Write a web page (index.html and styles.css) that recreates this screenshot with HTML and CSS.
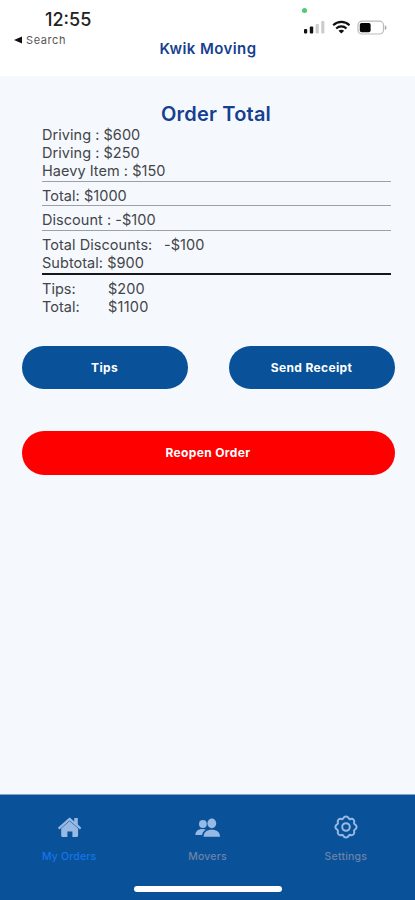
FILE: index.html
```
<!DOCTYPE html>
<html lang="en">
<head>
<meta charset="utf-8">
<meta name="viewport" content="width=device-width, initial-scale=1">
<title>Kwik Moving</title>
<link rel="stylesheet" href="styles.css">
</head>
<body>
<div class="app">
  <header class="header">
    <div class="clock">
      <div class="time">12:55</div>
      <div class="back"><svg width="8" height="8" viewBox="0 0 8 8"><path d="M0 4 8 .4v7.200z" fill="#111"/></svg><span>Search</span></div>
    </div>
    <h1 class="app-title">Kwik Moving</h1>
    <div class="status">
      <i class="privacy-dot"></i>
      <svg width="84" height="16" viewBox="0 0 84 16">
        <rect x="0" y="9" width="3.2" height="4.5" rx="1" fill="#111"/>
        <rect x="5.8" y="6.500" width="3.4" height="7" rx="1" fill="#111"/>
        <rect x="11.6" y="4" width="3.2" height="9.5" rx="1" fill="#ccc"/>
        <rect x="17.2" y="1" width="3.2" height="12.5" rx="1" fill="#ccc"/>
        <g fill="none" stroke="#111" stroke-width="2.1">
          <path d="M29.2 5.2c4.600-4.500 11.700-4.500 16.300 0"/>
          <path d="M32.200 8.500c3-2.800 7.300-2.800 10.300 0"/>
        </g>
        <path d="M34.500 10.700c1.700-1.400 4-1.400 5.700 0l-2.850 2.800z" fill="#111"/>
        <rect x="54" y="1.200" width="25.500" height="12.800" rx="4" fill="#fff" stroke="#bbb" stroke-width="1.200"/>
        <rect x="55.800" y="3" width="10.800" height="9.200" rx="1.800" fill="#050505"/>
        <path d="M80.800 5.200c2.300.8 2.300 4 0 4.800z" fill="#aaa"/>
      </svg>
    </div>
  </header>

  <main class="content">
    <h2 class="title">Order Total</h2>
    <section class="summary">
      <div class="group">
        <p>Driving : $600</p>
        <p>Driving : $250</p>
        <p>Haevy Item : $150</p>
      </div>
      <div class="group"><p>Total: $1000</p></div>
      <div class="group"><p>Discount : -$100</p></div>
      <div class="group strong">
        <p class="pair"><span class="label-wide">Total Discounts:</span><span>-$100</span></p>
        <p>Subtotal: $900</p>
      </div>
      <div class="group last">
        <p class="pair"><span class="label">Tips:</span><span>$200</span></p>
        <p class="pair"><span class="label">Total:</span><span class="grand">$1100</span></p>
      </div>
    </section>
    <div class="actions">
      <button class="btn">Tips</button>
      <button class="btn">Send Receipt</button>
      <button class="btn danger">Reopen Order</button>
    </div>
  </main>

  <nav class="tabs">
    <a class="tab active">
      <svg width="26" height="26" viewBox="0 0 26 26" fill="#97b9e3"><path d="M14.600 4.200 18.200 7.400V4h3.600v6.600l3.500 3.100-1.300 1.700L13.600 6.400 3.400 15.400l-1.500-1.700L12.600 4.200c.6-.5 1.400-.5 2 0z"/><path d="m13.600 7.100 8.500 7.500v6.900c0 .9-.6 1.500-1.500 1.500h-4.200v-5.400h-5V23H6.700c-.9 0-1.500-.6-1.500-1.500v-6.900z"/></svg>
      <span>My Orders</span>
    </a>
    <a class="tab">
      <svg width="26" height="26" viewBox="0 0 26 26" fill="#97b9e3"><ellipse cx="8.900" cy="10" rx="3.900" ry="4.100"/><path d="M1.400 21c0-3.900 3-6 7-6 1.400 0 2.500.2 3.500.7-2.300 1.200-3.600 3-3.800 5.300z"/><ellipse cx="17.800" cy="9.400" rx="4.400" ry="4.800"/><path d="M9.600 22.800c0-4.500 3.200-7 8.200-7s8.200 2.500 8.200 7z"/></svg>
      <span>Movers</span>
    </a>
    <a class="tab">
      <svg width="26" height="26" viewBox="0 0 26 26" fill="none" stroke="#97b9e3" stroke-width="2" stroke-linejoin="round"><path d="M10.300 4.200C11 2.800 11.500 2.400 13 2.400s2 .4 2.700 1.800c.4.900.9 1.100 1.800.8 1.400-.5 2-.4 3 .6s1.100 1.600.6 3c-.3.900-.1 1.400.8 1.800 1.400.7 1.700 1.100 1.700 2.600s-.3 1.900-1.700 2.600c-.9.4-1.100.9-.8 1.800.5 1.400.4 2-.6 3s-1.600 1.100-3 .6c-.9-.3-1.400-.1-1.800.8-.7 1.400-1.200 1.800-2.700 1.800s-2-.4-2.700-1.800c-.4-.9-.9-1.100-1.800-.8-1.400.5-2 .4-3-.6s-1.100-1.600-.6-3c.3-.9.100-1.400-.8-1.800C2.700 14.900 2.400 14.500 2.400 13s.3-1.900 1.700-2.600c.9-.4 1.100-.9.800-1.800-.5-1.400-.4-2 .6-3s1.600-1.100 3-.6c.9.300 1.400.1 1.800-.8z"/><circle cx="13" cy="13" r="3.800"/></svg>
      <span>Settings</span>
    </a>
    <i class="home-indicator"></i>
  </nav>
</div>
</body>
</html>
```
FILE: styles.css
```
* { box-sizing: border-box; }

body {
  margin: 0;
  font-family: Inter, "Liberation Sans", sans-serif;
  color: #444548;
}

h1, h2, p { margin: 0; }

.app {
  display: flex;
  flex-direction: column;
  height: 900px;
  background: #f5f9fe;
}

.header {
  display: grid;
  grid-template-columns: 1fr auto 1fr;
  height: 76px;
  background: #fff;
}

.clock { padding: 9px 0 0 14px; }

.time {
  padding-left: 31px;
  font-size: 18px;
  font-weight: 500;
  line-height: 22px;
  color: #222;
}

.back {
  display: flex;
  align-items: center;
  gap: 4px;
  height: 18px;
  font-size: 11px;
  letter-spacing: .6px;
  color: #555;
}

.app-title {
  padding: 39px 0 0 1px;
  font-size: 15px;
  font-weight: 600;
  line-height: 20px;
  letter-spacing: .42px;
  color: #173f91;
}

.status {
  display: flex;
  flex-direction: column;
  padding: 8px 0 0 47px;
}

.privacy-dot {
  width: 5px;
  height: 5px;
  margin: 0 0 7px -2px;
  border-radius: 50%;
  background: #4ccb72;
}

.content {
  flex: 1;
  padding-top: 26px;
}

.title {
  padding-left: 17px;
  font-size: 20px;
  font-weight: 600;
  line-height: 24px;
  letter-spacing: .2px;
  text-align: center;
  color: #173f91;
}

.summary {
  margin: 0 24px 0 42px;
  font-size: 14.5px;
  line-height: 18px;
  letter-spacing: .04px;
}

.group {
  height: 24.5px;
  padding-top: 5px;
  border-bottom: 1px solid #9da1a5;
}

.group:first-child { height: 55.5px; padding-top: 0; }
.group.strong { height: 44px; border-bottom: 2px solid #151719; }
.group.last { height: 42px; padding-top: 5px; border: 0; }

.pair { display: flex; }
.label { width: 66px; }
.label-wide { width: 122px; }
.grand { letter-spacing: .25px; }

.actions {
  display: grid;
  grid-template-columns: 1fr 1fr;
  gap: 42px 41px;
  padding: 29px 20.5px 0 21.5px;
}

.btn {
  height: 43.5px;
  padding: 0;
  border: 0;
  border-radius: 22px;
  background: #09529a;
  font: 700 12px Inter, "Liberation Sans", sans-serif;
  letter-spacing: .35px;
  color: #fff;
}

.danger {
  grid-column: 1 / -1;
  background: #f00;
}

.tabs {
  position: relative;
  display: grid;
  grid-template-columns: repeat(3, 1fr);
  height: 106px;
  border-top: 1px solid #80a5cc;
  background: #09529a;
}

.tab {
  display: flex;
  flex-direction: column;
  align-items: center;
  gap: 9px;
  padding-top: 19px;
  font-size: 10.5px;
  font-weight: 500;
  line-height: 16px;
  letter-spacing: .2px;
  color: #6c83a7;
}

.active { color: #1474e8; }

.home-indicator {
  position: absolute;
  left: 134px;
  bottom: 8px;
  width: 148px;
  height: 6px;
  border-radius: 3px;
  background: #fff;
}
```
